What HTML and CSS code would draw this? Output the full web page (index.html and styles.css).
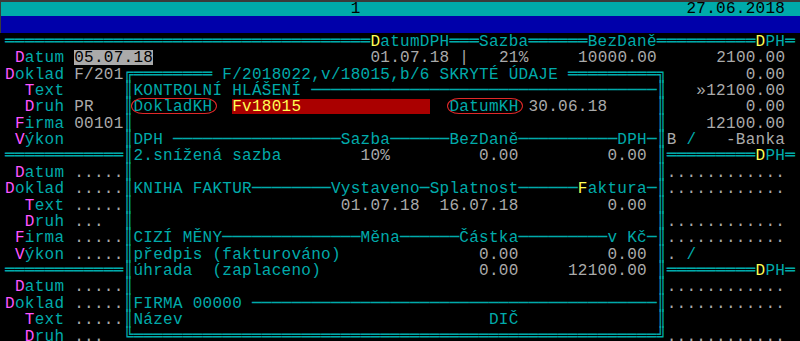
FILE: index.html
```html
<!DOCTYPE html>
<html lang="cs">
<head>
  <meta charset="UTF-8" />
  <title>Kontrolní hlášení</title>
  <link rel="stylesheet" href="styles.css">
</head>
<body>
  <div class="screen">
    <div class="row top"><div class="full">                                   1                                 27.06.2018</div></div>
    <div class="row blue"></div>
    <div class="row"><div class="full"><span class="k">═════════════════════════════════════</span><span class="y">D</span>atumDPH<span class="k">═══</span>Sazba<span class="k">══════</span>BezDaně<span class="k">══════════</span><span class="y">D</span>PH<span class="k">═</span></div></div>
    <div class="row"><div class="full"> <span class="m">D</span>atum <span class="bar hl">05.07.18</span>                      <span class="g">01.07.18 |   21%     10000.00      2100.00</span></div></div>

    <div class="row">
      <div class="lp"><span class="m">D</span>oklad <span class="g">F/201</span></div>
      <div class="dlg"><span class="k">╔</span><span class="in"><span class="k">════════</span> F/2018022,v/18015,b/6 SKRYTÉ ÚDAJE <span class="k">═════════</span></span><span class="k">╗</span></div>
      <div class="rp">        <span class="g">0.00</span></div>
    </div>
    <div class="row">
      <div class="lp">  <span class="m">T</span>ext</div>
      <div class="dlg"><span class="k">║</span><span class="in">KONTROLNÍ HLÁŠENÍ <span class="k">───────────────────────────────────</span></span><span class="k">║</span></div>
      <div class="rp">   <span class="g">»12100.00</span></div>
    </div>
    <div class="row">
      <div class="lp">  <span class="m">D</span>ruh <span class="g">PR</span></div>
      <div class="dlg"><span class="k">║</span><span class="in"><span class="mark">DokladKH</span>  <span class="bar rb">Fv18015             </span>  <span class="mark">DatumKH</span> <span class="g">30.06.18</span></span><span class="k">║</span></div>
      <div class="rp">        <span class="g">0.00</span></div>
    </div>
    <div class="row">
      <div class="lp"> <span class="m">F</span>irma <span class="g">00101</span></div>
      <div class="dlg"><span class="k">║</span><span class="in"></span><span class="k">║</span></div>
      <div class="rp">    <span class="g">12100.00</span></div>
    </div>
    <div class="row">
      <div class="lp"> <span class="m">V</span>ýkon</div>
      <div class="dlg"><span class="k">║</span><span class="in">DPH <span class="k">─────────────────</span>Sazba<span class="k">──────</span>BezDaně<span class="k">──────────</span>DPH<span class="k">─</span></span><span class="k">║</span></div>
      <div class="rp"><span class="g">B</span> /   <span class="g">-Banka</span></div>
    </div>
    <div class="row">
      <div class="lp"><span class="k">════════════</span></div>
      <div class="dlg"><span class="k">║</span><span class="in">2.snížená sazba        <span class="g">10%         0.00         0.00</span></span><span class="k">║</span></div>
      <div class="rp"><span class="k">═════════</span><span class="y">D</span>PH<span class="k">═</span></div>
    </div>
    <div class="row">
      <div class="lp"> <span class="m">D</span>atum <span class="g">.....</span></div>
      <div class="dlg"><span class="k">║</span><span class="in"></span><span class="k">║</span></div>
      <div class="rp"><span class="g">............</span></div>
    </div>
    <div class="row">
      <div class="lp"><span class="m">D</span>oklad <span class="g">.....</span></div>
      <div class="dlg"><span class="k">║</span><span class="in">KNIHA FAKTUR<span class="k">────────</span>Vystaveno<span class="k">─</span>Splatnost<span class="k">──────</span><span class="y">F</span>aktura<span class="k">─</span></span><span class="k">║</span></div>
      <div class="rp"><span class="g">............</span></div>
    </div>
    <div class="row">
      <div class="lp">  <span class="m">T</span>ext <span class="g">.....</span></div>
      <div class="dlg"><span class="k">║</span><span class="in">                     <span class="g">01.07.18  16.07.18         0.00</span></span><span class="k">║</span></div>
      <div class="rp"></div>
    </div>
    <div class="row">
      <div class="lp">  <span class="m">D</span>ruh <span class="g">...</span></div>
      <div class="dlg"><span class="k">║</span><span class="in"></span><span class="k">║</span></div>
      <div class="rp"><span class="g">............</span></div>
    </div>
    <div class="row">
      <div class="lp"> <span class="m">F</span>irma <span class="g">.....</span></div>
      <div class="dlg"><span class="k">║</span><span class="in">CIZÍ MĚNY<span class="k">──────────────</span>Měna<span class="k">──────</span>Částka<span class="k">─────────</span>v Kč<span class="k">─</span></span><span class="k">║</span></div>
      <div class="rp"><span class="g">............</span></div>
    </div>
    <div class="row">
      <div class="lp"> <span class="m">V</span>ýkon <span class="g">.....</span></div>
      <div class="dlg"><span class="k">║</span><span class="in">předpis (fakturováno)              <span class="g">0.00         0.00</span></span><span class="k">║</span></div>
      <div class="rp"><span class="g">.</span> /</div>
    </div>
    <div class="row">
      <div class="lp"><span class="k">════════════</span></div>
      <div class="dlg"><span class="k">║</span><span class="in">úhrada  (zaplaceno)                <span class="g">0.00     12100.00</span></span><span class="k">║</span></div>
      <div class="rp"><span class="k">═════════</span><span class="y">D</span>PH<span class="k">═</span></div>
    </div>
    <div class="row">
      <div class="lp"> <span class="m">D</span>atum <span class="g">.....</span></div>
      <div class="dlg"><span class="k">║</span><span class="in"></span><span class="k">║</span></div>
      <div class="rp"><span class="g">............</span></div>
    </div>
    <div class="row">
      <div class="lp"><span class="m">D</span>oklad <span class="g">.....</span></div>
      <div class="dlg"><span class="k">║</span><span class="in">FIRMA 00000 <span class="k">─────────────────────────────────────────</span></span><span class="k">║</span></div>
      <div class="rp"><span class="g">............</span></div>
    </div>
    <div class="row">
      <div class="lp">  <span class="m">T</span>ext <span class="g">.....</span></div>
      <div class="dlg"><span class="k">║</span><span class="in">Název                               DIČ</span><span class="k">║</span></div>
      <div class="rp"></div>
    </div>
    <div class="row">
      <div class="lp">  <span class="m">D</span>ruh <span class="g">...</span></div>
      <div class="dlg"><span class="k">╚</span><span class="in"><span class="k">═════════════════════════════════════════════════════</span></span><span class="k">╝</span></div>
      <div class="rp"><span class="g">............</span></div>
    </div>
  </div>
</body>
</html>
```

FILE: styles.css
```css
body {
  margin: 0;
  background: #000;
  overflow: hidden;
  font-family: "Liberation Mono", "DejaVu Sans Mono", monospace;
  font-size: 16px;
}
.screen {
  color: #00aaaa;
}
.row {
  display: flex;
  height: 16.375px;
  padding-left: 5px;
  line-height: 19px;
  letter-spacing: 0.275px;
}
.full, .lp, .dlg, .rp, .in {
  white-space: pre;
}
.top {
  background: #00aaaa;
  color: #000;
  box-shadow: inset 0 2px #3a3a3a, inset 1px 0 #3a3a3a;
}
.blue {
  background: #0000aa;
  box-shadow: inset 1px 0 #3a3a3a;
}
.lp {
  width: 118.5px;
}
.dlg {
  width: 543.125px;
}
.in {
  display: inline-block;
  width: 523.375px;
}
.rp {
  width: 128.375px;
}
.k {
  font-family: "DejaVu Sans Mono", monospace;
  letter-spacing: 0.242px;
  line-height: 0;
}
.m { color: #ff55ff; }
.y { color: #ffff55; }
.g { color: #aaaaaa; }
.bar {
  display: inline-block;
  height: 16.375px;
}
.hl {
  color: #000;
  background: linear-gradient(transparent 1px, #aaaaaa 1px, #aaaaaa 15.5px, transparent 15.5px);
}
.rb {
  color: #ffff55;
  background: linear-gradient(transparent 1px, #aa0000 1px, #aa0000 15.5px, transparent 15.5px);
}
.mark {
  position: relative;
}
.mark::after {
  content: "";
  position: absolute;
  left: -2.5px;
  right: -4.5px;
  top: -0.4px;
  height: 16px;
  box-sizing: border-box;
  border: 1.5px solid #e02828;
  border-radius: 12px / 8px;
}
```
